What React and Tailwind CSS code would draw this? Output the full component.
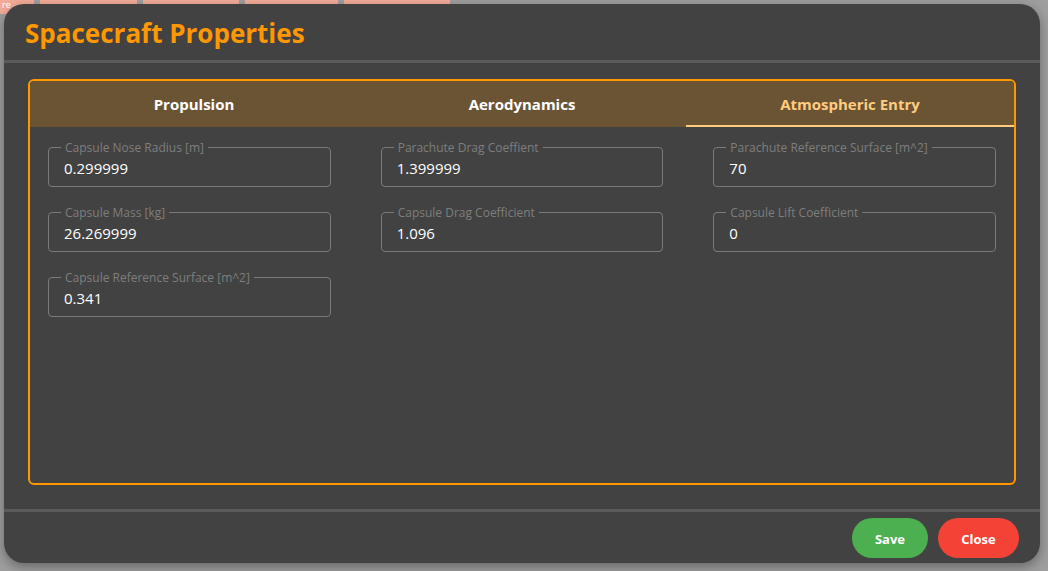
const TABS = ["Propulsion", "Aerodynamics", "Atmospheric Entry"];

const FIELDS = [
  { label: "Capsule Nose Radius [m]", value: "0.299999" },
  { label: "Parachute Drag Coeffient", value: "1.399999" },
  { label: "Parachute Reference Surface [m^2]", value: "70" },
  { label: "Capsule Mass [kg]", value: "26.269999" },
  { label: "Capsule Drag Coefficient", value: "1.096" },
  { label: "Capsule Lift Coefficient", value: "0" },
  { label: "Capsule Reference Surface [m^2]", value: "0.341" },
];

function Field({ label, value }) {
  return (
    <div className="relative h-[40px] rounded-[4px] border border-[#7a7a7a] px-[15px] pt-[10px]">
      <span className="absolute -top-[8px] left-[12px] bg-[#424242] px-[4px] text-[12px] leading-[16px] text-[#7e7e7e]">
        {label}
      </span>
      <div className="text-[15px] leading-[20px] text-white">{value}</div>
    </div>
  );
}

export default function App() {
  const active = 2;
  return (
    <div
      className="relative h-[571px] w-[1048px] overflow-hidden bg-[#9e9e9e]"
      style={{ fontFamily: '"Open Sans", "Noto Sans", sans-serif' }}
    >
      {/* page behind the dialog */}
      <div className="flex h-[14px] items-start gap-[6px]">
        <div className="h-[14px] w-[34px] rounded-br-[6px] bg-[#f3ab98] pl-[2px] text-[9px] leading-[9px] text-white">
          re
        </div>
        <div className="h-[14px] w-[97px] rounded-b-[6px] bg-[#f3ab98]" />
        <div className="h-[14px] w-[96px] rounded-b-[6px] bg-[#f3ab98]" />
        <div className="h-[14px] w-[93px] rounded-b-[6px] bg-[#f3ab98]" />
        <div className="h-[14px] w-[106px] rounded-b-[6px] bg-[#f3ab98]" />
      </div>

      {/* dialog */}
      <div className="absolute left-[4px] top-[4px] flex h-[559px] w-[1036px] flex-col rounded-[20px] bg-[#424242] shadow-[0_4px_12px_rgba(0,0,0,0.35)]">
        <div className="flex h-[56px] items-center px-[21px] pt-[3px]">
          <h1 className="text-[26px] font-bold text-[#ff9800]">
            Spacecraft Properties
          </h1>
        </div>
        <div className="h-[3px] bg-[#5b5b5b]" />

        <div className="px-[24px] pb-[24px] pt-[16px]">
          <div className="flex h-[406px] flex-col overflow-hidden rounded-[6px] border-2 border-[#ff9800]">
            <div className="grid h-[46px] grid-cols-3 bg-[#6b5434]">
              {TABS.map((t, i) => (
                <div
                  key={t}
                  className={`flex items-center justify-center text-[15px] font-bold ${
                    i === active
                      ? "border-b-2 border-[#ffcc80] pt-[2px] text-[#ffcc80]"
                      : "text-white"
                  }`}
                >
                  {t}
                </div>
              ))}
            </div>
            <div className="grid grid-cols-3 gap-x-[50px] gap-y-[25px] px-[18px] pt-[20px]">
              {FIELDS.map((f) => (
                <Field key={f.label} label={f.label} value={f.value} />
              ))}
            </div>
          </div>
        </div>

        <div className="h-[3px] bg-[#5b5b5b]" />
        <div className="flex flex-1 items-start justify-end gap-[10px] pr-[21px] pt-[6px]">
          <button className="h-[40px] w-[76px] rounded-full bg-[#4caf50] pt-[3px] text-[13px] font-bold text-white">
            Save
          </button>
          <button className="h-[40px] w-[81px] rounded-full bg-[#f44336] pt-[3px] text-[13px] font-bold text-white">
            Close
          </button>
        </div>
      </div>
    </div>
  );
}
